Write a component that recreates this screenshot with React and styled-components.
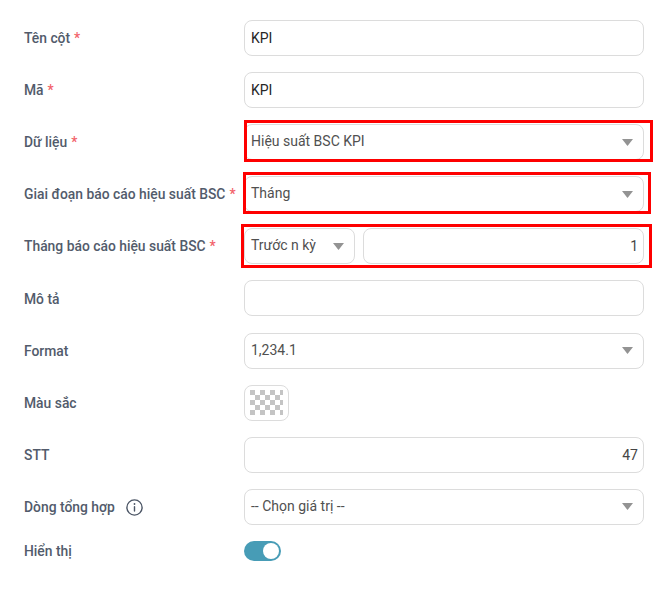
import React from "react";
import styled, { createGlobalStyle } from "styled-components";

const Global = createGlobalStyle`
  html, body { margin: 0; padding: 0; background: #fff; }
  body { font-family: Roboto, "Liberation Sans", sans-serif; }
`;

const Page = styled.div`
  position: relative;
  width: 659px;
  height: 601px;
  box-sizing: border-box;
  padding: 20px 15px 0 24px;
  overflow: hidden;
`;

const Form = styled.form`
  display: flex;
  flex-direction: column;
  gap: 16.1px;
  margin: 0;
`;

const Row = styled.div`
  display: grid;
  grid-template-columns: 220px 400px;
  align-items: center;
  min-height: ${(p) => (p.$short ? "20px" : "36px")};
`;

const Label = styled.label`
  display: flex;
  align-items: center;
  padding-top: 0.16px;
  font-size: 13.86px;
  font-weight: 500;
  color: #525b6b;
  white-space: nowrap;
`;

const Star = styled.span`
  color: #f2626a;
  margin-left: 4px;
`;

const InfoIcon = styled.svg`
  width: 17px;
  height: 17px;
  margin-left: 11px;
  margin-top: 2px;
`;

const TextInput = styled.input`
  width: 100%;
  height: 36px;
  box-sizing: border-box;
  border: 1px solid #dcdcdc;
  border-radius: 8px;
  padding: 0 5px 0 6px;
  font: 400 14px Roboto, "Liberation Sans", sans-serif;
  color: ${(p) => (p.$dark ? "#262626" : "#454545")};
  text-align: ${(p) => (p.$right ? "right" : "left")};
  outline: none;
  background: #fff;
`;

const Select = styled.div`
  display: flex;
  align-items: center;
  justify-content: space-between;
  width: ${(p) => p.$width || "100%"};
  flex: none;
  height: 36px;
  box-sizing: border-box;
  border: 1px solid #dcdcdc;
  border-radius: 8px;
  padding: 0 10px 2px 6px;
  font-size: 14px;
  color: #505050;
  background: #fff;
`;

const Caret = styled.svg`
  width: 11px;
  height: 7px;
  flex: none;
  margin-top: 2px;
  fill: #939393;
`;

const Pair = styled.div`
  display: flex;
  gap: 8px;
`;

const Swatch = styled.div`
  display: flex;
  align-items: center;
  justify-content: center;
  width: 45px;
  height: 36px;
  box-sizing: border-box;
  border: 1px solid #dcdcdc;
  border-radius: 8px;
`;

const Checker = styled.svg`
  width: 33px;
  height: 25px;
  shape-rendering: crispEdges;
`;

const Toggle = styled.div`
  display: flex;
  align-items: center;
  justify-content: flex-end;
  width: 37px;
  height: 20px;
  box-sizing: border-box;
  padding-right: 2px;
  border-radius: 10px;
  background: #479cb6;
`;

const Knob = styled.div`
  width: 16px;
  height: 16px;
  border-radius: 50%;
  background: #fff;
`;

const Highlight = styled.div`
  position: absolute;
  box-sizing: border-box;
  left: ${(p) => p.$x}px;
  top: ${(p) => p.$y}px;
  width: ${(p) => p.$w}px;
  height: ${(p) => p.$h}px;
  border: 3px solid #fe0000;
  pointer-events: none;
`;

const CaretIcon = () => (
  <Caret viewBox="0 0 11 7">
    <path d="M0 0h11L5.5 7z" />
  </Caret>
);

const Required = ({ children }) => (
  <Label>
    {children}
    <Star>*</Star>
  </Label>
);

const CheckerIcon = () => (
  <Checker viewBox="0 0 33 25">
    <defs>
      <pattern id="chk" width="10" height="10" patternUnits="userSpaceOnUse">
        <path d="M0 0h5v5H0zM5 5h5v5H5z" fill="#c4c4c4" />
      </pattern>
    </defs>
    <rect width="33" height="25" fill="url(#chk)" />
  </Checker>
);

export default function App() {
  return (
    <Page>
      <Global />
      <Form>
        <Row>
          <Required>Tên cột</Required>
          <TextInput $dark defaultValue="KPI" />
        </Row>
        <Row>
          <Required>Mã</Required>
          <TextInput $dark defaultValue="KPI" />
        </Row>
        <Row>
          <Required>Dữ liệu</Required>
          <Select>
            Hiệu suất BSC KPI
            <CaretIcon />
          </Select>
        </Row>
        <Row>
          <Required>Giai đoạn báo cáo hiệu suất BSC</Required>
          <Select>
            Tháng
            <CaretIcon />
          </Select>
        </Row>
        <Row>
          <Required>Tháng báo cáo hiệu suất BSC</Required>
          <Pair>
            <Select $width="111px">
              Trước n kỳ
              <CaretIcon />
            </Select>
            <TextInput $right defaultValue="1" />
          </Pair>
        </Row>
        <Row>
          <Label>Mô tả</Label>
          <TextInput />
        </Row>
        <Row>
          <Label>Format</Label>
          <Select>
            1,234.1
            <CaretIcon />
          </Select>
        </Row>
        <Row>
          <Label>Màu sắc</Label>
          <Swatch>
            <CheckerIcon />
          </Swatch>
        </Row>
        <Row>
          <Label>STT</Label>
          <TextInput $right defaultValue="47" />
        </Row>
        <Row>
          <Label>
            Dòng tổng hợp
            <InfoIcon viewBox="0 0 17 17" fill="none" stroke="#4b5565" strokeWidth="1.4" strokeLinecap="round">
              <circle cx="8.5" cy="8.5" r="7.6" />
              <path d="M8.5 7.8v4.2" />
              <path d="M8.5 5v.1" strokeWidth="1.8" />
            </InfoIcon>
          </Label>
          <Select>
            -- Chọn giá trị --
            <CaretIcon />
          </Select>
        </Row>
        <Row $short>
          <Label>Hiển thị</Label>
          <Toggle>
            <Knob />
          </Toggle>
        </Row>
      </Form>
      <Highlight $x={244} $y={120} $w={409} $h={42} />
      <Highlight $x={243} $y={172} $w={408} $h={42} />
      <Highlight $x={241} $y={224} $w={411} $h={44} />
    </Page>
  );
}
